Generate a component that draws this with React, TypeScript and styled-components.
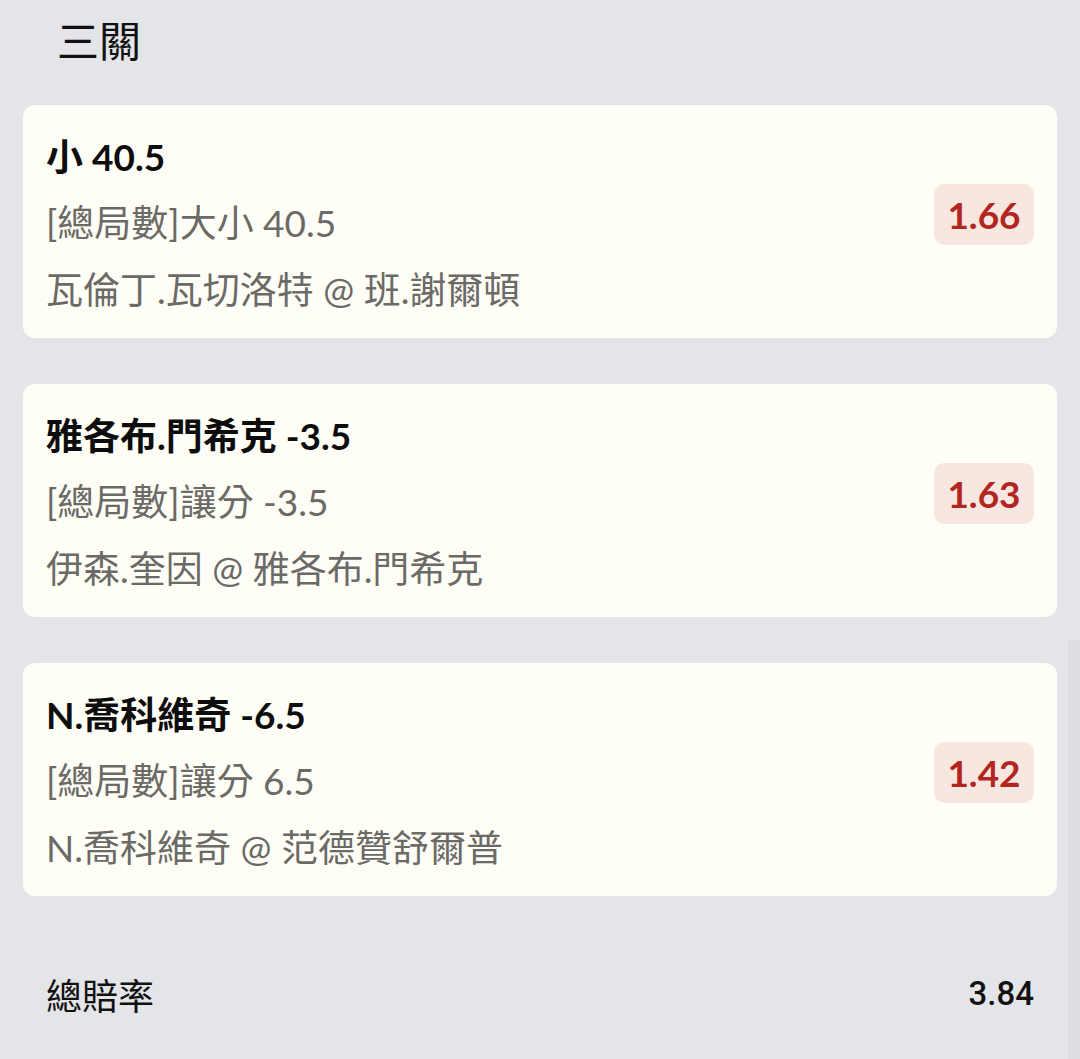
import React from "react";
import styled, { createGlobalStyle } from "styled-components";

const GlobalStyle = createGlobalStyle`
  html, body {
    margin: 0;
    padding: 0;
    background: #e4e5e8;
  }
  body {
    font-family: Lato, "Noto Sans CJK TC", sans-serif;
  }
`;

const Page = styled.div`
  position: relative;
  width: 1080px;
  height: 1059px;
  overflow: hidden;
  background: #e4e5e8;
  padding: 0 23px;
  box-sizing: border-box;
`;

const Heading = styled.div`
  height: 105px;
  padding-left: 34px;
  padding-top: 10px;
  box-sizing: border-box;
  font-family: "Noto Sans CJK TC", sans-serif;
  font-size: 42px;
  line-height: 58px;
  color: #111;
`;

const List = styled.div`
  display: flex;
  flex-direction: column;
  gap: 46px;
`;

const Card = styled.div`
  height: 233px;
  box-sizing: border-box;
  background: #fffef6;
  border-radius: 12px;
  padding: 20px 23px 0 23px;
  display: flex;
  align-items: flex-start;
  justify-content: space-between;
`;

const Info = styled.div`
  display: flex;
  flex-direction: column;
`;

const Title = styled.div`
  font-size: 37px;
  font-weight: 700;
  line-height: 64px;
  color: #0d0d0d;
`;

const Line = styled.div`
  font-size: 37px;
  line-height: 67px;
  color: #6b6a66;
`;

const Odds = styled.div`
  margin-top: 59px;
  min-width: 100px;
  height: 61px;
  box-sizing: border-box;
  padding: 0 12px;
  border-radius: 10px;
  background: #f8e7e1;
  color: #b2261f;
  font-size: 37px;
  font-weight: 700;
  display: flex;
  align-items: center;
  justify-content: center;
`;

const Footer = styled.div`
  height: 163px;
  display: flex;
  align-items: center;
  justify-content: space-between;
  padding: 0 23px;
  padding-top: 32px;
  box-sizing: border-box;
`;

const FooterLabel = styled.div`
  font-family: "Noto Sans CJK TC", sans-serif;
  font-size: 36px;
  color: #111;
`;

const FooterValue = styled.div`
  font-family: Roboto, "Liberation Sans", sans-serif;
  font-size: 33px;
  font-weight: 500;
  color: #111;
`;

const ScrollThumb = styled.div`
  position: absolute;
  right: 0;
  top: 640px;
  width: 12px;
  bottom: 0;
  background: #dcdde0;
`;

const legs = [
  { title: "小 40.5", market: "[總局數]大小 40.5", match: "瓦倫丁.瓦切洛特 @ 班.謝爾頓", odds: "1.66" },
  { title: "雅各布.門希克 -3.5", market: "[總局數]讓分 -3.5", match: "伊森.奎因 @ 雅各布.門希克", odds: "1.63" },
  { title: "N.喬科維奇 -6.5", market: "[總局數]讓分 6.5", match: "N.喬科維奇 @ 范德贊舒爾普", odds: "1.42" },
];

export default function App() {
  return (
    <>
      <GlobalStyle />
      <Page>
        <Heading>三關</Heading>
        <List>
          {legs.map((leg) => (
            <Card key={leg.title}>
              <Info>
                <Title>{leg.title}</Title>
                <Line>{leg.market}</Line>
                <Line>{leg.match}</Line>
              </Info>
              <Odds>{leg.odds}</Odds>
            </Card>
          ))}
        </List>
        <Footer>
          <FooterLabel>總賠率</FooterLabel>
          <FooterValue>3.84</FooterValue>
        </Footer>
        <ScrollThumb />
      </Page>
    </>
  );
}
